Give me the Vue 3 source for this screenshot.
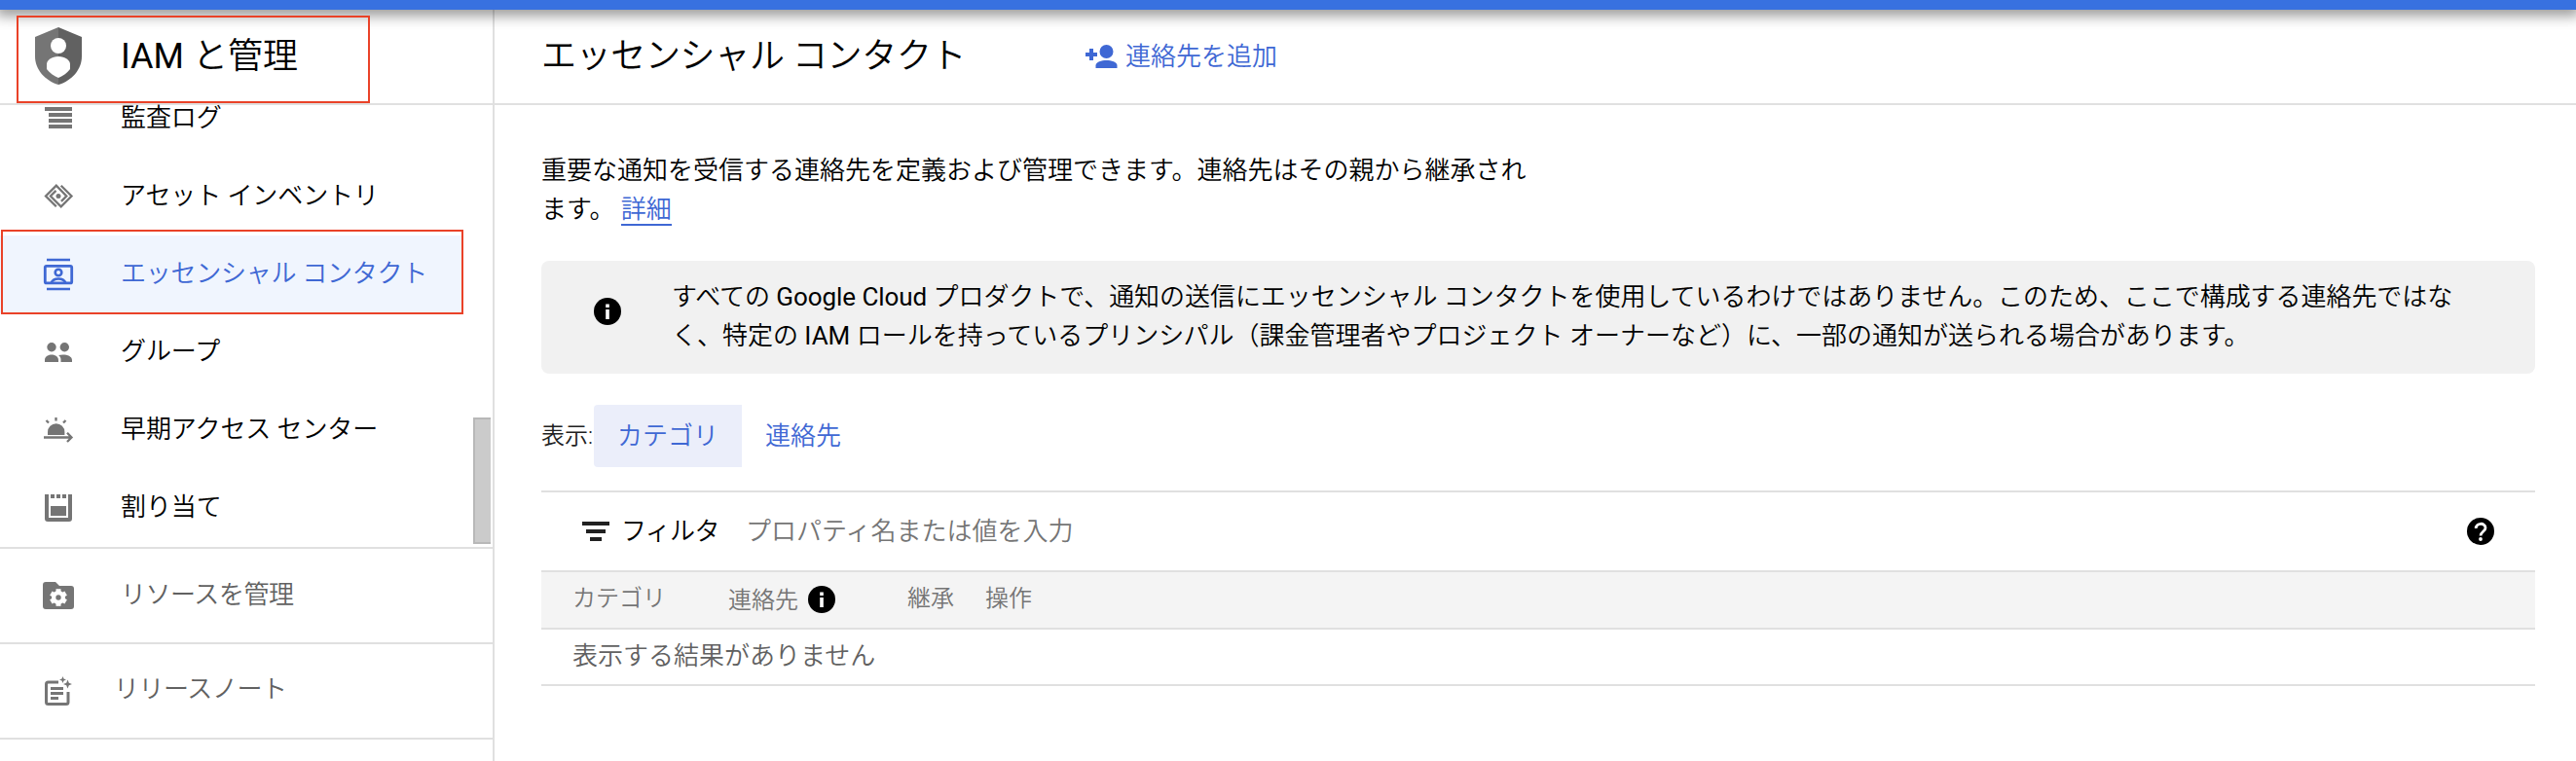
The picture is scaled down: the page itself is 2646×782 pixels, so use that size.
<script setup>
const nav = [
  { id: 'log', label: '監査ログ' },
  { id: 'asset', label: 'アセット インベントリ' },
  { id: 'contact', label: 'エッセンシャル コンタクト', active: true },
  { id: 'group', label: 'グループ' },
  { id: 'early', label: '早期アクセス センター' },
  { id: 'quota', label: '割り当て' },
]
</script>

<template>
  <div class="app">
    <div class="topbar"></div>
    <div class="body">
      <aside class="side">
        <div class="side-head">
          <svg class="shield" width="48" height="60" viewBox="0 0 48 60">
            <path fill="#757575" d="M24 0 0 10v20c0 13 10 25 24 29z" />
            <path fill="#616161" d="M24 0l24 10v20c0 13-10 25-24 29z" />
            <circle cx="24" cy="19" r="8" fill="#fff" />
            <path fill="#fff" d="M24 30c7 0 12 4 12 8v5c-3 4-7 7-12 9-5-2-9-5-12-9v-5c0-4 5-8 12-8z" />
          </svg>
          <span class="product">IAM <span class="light">と管理</span></span>
          <div class="mark mark-head"></div>
        </div>
        <nav class="nav">
          <div v-for="n in nav" :key="n.id" class="item" :class="{ active: n.active }">
            <svg class="ico" width="36" height="36" viewBox="0 0 36 36">
              <path v-if="n.id === 'log'" fill="currentColor" d="M4 6h28v4H4zM8 12h24v4H8zM8 18h24v4H8zM8 24h24v4H8z" />
              <g v-else-if="n.id === 'asset'" fill="none" stroke="currentColor" stroke-width="2.300">
                <path d="M20.700 6.700 31.500 17.500 20.700 28.300 9.900 17.500l5.600-5.600" />
                <path d="M15.800 28.300 5 17.500 15.800 6.700 26.300 17.500l-5.400 5.400" />
                <circle cx="18" cy="17.500" r="2.500" fill="currentColor" stroke="none" />
              </g>
              <g v-else-if="n.id === 'contact'" fill="none" stroke="currentColor">
                <path d="M6 3h24M6 33h24" stroke-width="2.600" />
                <rect x="4.300" y="9.300" width="27.400" height="17.600" rx="1.500" stroke-width="2.800" />
                <circle cx="18" cy="16" r="3.300" stroke-width="2.600" />
                <path d="M10.500 27c1.500-4 4.500-4.500 7.500-4.500s6 .5 7.500 4.500" stroke-width="2.600" />
              </g>
              <g v-else-if="n.id === 'group'" fill="currentColor">
                <circle cx="11" cy="12.700" r="4.700" /><circle cx="24.300" cy="12.700" r="4.700" />
                <path d="M4 28v-2c0-4 4-5.500 7-5.500s7 1.500 7 5.500v2zM20.500 28v-2.500c0-2-1-3.500-2.500-4.500 6-1.500 14 0 14 5v2z" />
              </g>
              <g v-else-if="n.id === 'early'">
                <path fill="currentColor" d="M7 23v-3a8.700 8.700 0 0 1 17.400 0v3z" />
                <path fill="none" stroke="currentColor" stroke-width="2.300" d="M3 25.500h28M27 20.800l4.500 4.700-4.500 4.500M15.500 5v3.500M5.500 8l2.500 2.500M25.500 8 23 10.500" />
              </g>
              <path v-else fill="currentColor" d="M4 4h4v24h20V4h4v25q0 3-3 3H7q-3 0-3-3zM10 16h16v10H10zM10 4h4v4h-4zM16 4h4v4h-4zM22 4h4v4h-4z" />
            </svg>
            <span>{{ n.label }}</span>
            <div v-if="n.active" class="mark mark-item"></div>
          </div>
          <div class="thumb"></div>
        </nav>
        <div class="extra">
          <svg class="ico" width="36" height="36" viewBox="0 0 36 36">
            <path fill="currentColor" d="M5 4h10l4 4h12q3 0 3 3v18q0 3-3 3H5q-3 0-3-3V7q0-3 3-3z" />
            <g fill="#fff"><circle cx="18" cy="20" r="7" /><path d="M15.500 11.200h5v17.600h-5z" /><path d="M15.500 11.200h5v17.600h-5z" transform="rotate(60 18 20)" /><path d="M15.500 11.200h5v17.600h-5z" transform="rotate(120 18 20)" /></g>
            <circle cx="18" cy="20" r="2.700" fill="currentColor" />
          </svg>
          <span>リソースを管理</span>
        </div>
        <div class="extra notes">
          <svg class="ico" width="36" height="36" viewBox="0 0 36 36">
            <path fill="none" stroke="currentColor" stroke-width="3" d="M18 9H7.500q-2 0-2 2v18.500q0 2 2 2H26q2 0 2-2V19" />
            <path fill="currentColor" d="M10 14h13v3H10zM10 19h13v3H10zM10 24h8v3h-8zM27.500 6.500l1.300 3.200L32 11l-3.200 1.300-1.300 3.200-1.300-3.200L23 11l3.200-1.300zM22.500 3l1 2.500 2.500 1-2.500 1-1 2.500-1-2.500-2.500-1 2.500-1z" />
          </svg>
          <span>リリースノート</span>
        </div>
      </aside>
      <main class="main">
        <header class="head">
          <h1>エッセンシャル コンタクト</h1>
          <a class="add">
            <svg width="33" height="24" viewBox="0 0 33 24"><path fill="currentColor" d="M4 4h4v4h4v4H8v4H4v-4H0V8h4z" /><circle cx="21.500" cy="7" r="7" fill="currentColor" /><path fill="currentColor" d="M10.500 24v-2.500c0-4 6-5.500 11-5.500s11 1.500 11 5.500V24z" /></svg>
            <span>連絡先を追加</span>
          </a>
        </header>
        <div class="content">
          <p class="desc">重要な通知を受信する連絡先を定義および管理できます。連絡先はその親から継承され<br />ます。 <a>詳細</a></p>
          <div class="banner">
            <svg width="28" height="28" viewBox="0 0 28 28"><circle cx="14" cy="14" r="14" /><path fill="#fff" d="M12.200 6.500h3.600v3.400h-3.600zM12.200 12h3.600v10h-3.600z" /></svg>
            <p><span class="tight">すべての <b>Google Cloud</b> プロダクトで、通知の送信にエッセンシャル コンタクトを使用しているわけではありません。このため、ここで構成する連絡先ではな</span><br />く、特定の <b>IAM</b> ロールを持っているプリンシパル（課金管理者やプロジェクト オーナーなど）に、一部の通知が送られる場合があります。</p>
          </div>
          <div class="view">
            <span class="view-label">表示:</span>
            <button class="tab on">カテゴリ</button>
            <button class="tab">連絡先</button>
          </div>
          <section class="table">
            <div class="filter">
              <svg width="28" height="20" viewBox="0 0 28 20"><path fill="#212121" d="M0 0h28v4H0zM4 8h20v4H4zM8 16h12v4H8z" /></svg>
              <span class="filter-label">フィルタ</span>
              <span class="placeholder">プロパティ名または値を入力</span>
              <svg class="help" width="28" height="28" viewBox="0 0 28 28"><circle cx="14" cy="14" r="14" /><path fill="none" stroke="#fff" stroke-width="2.800" d="M9.200 11c0-6.200 9.800-6.200 9.800-.6 0 3.600-5 4.200-5 8.100" /><circle cx="14" cy="22" r="1.900" fill="#fff" /></svg>
            </div>
            <div class="cols">
              <span class="col">カテゴリ</span>
              <span class="col-contact">連絡先
                <svg width="28" height="28" viewBox="0 0 28 28"><circle cx="14" cy="14" r="14" fill="#000" /><path fill="#fff" d="M12.200 6.500h3.600v3.400h-3.600zM12.200 12h3.600v10h-3.600z" /></svg>
              </span>
              <span class="col">継承</span>
              <span class="col">操作</span>
            </div>
            <div class="empty">表示する結果がありません</div>
          </section>
        </div>
      </main>
    </div>
  </div>
</template>

<style>
body { margin: 0; background: #fff; }
</style>

<style scoped>
* { box-sizing: border-box; }
.app {
  width: 2646px; height: 782px; overflow: hidden;
  display: flex; flex-direction: column;
  font: 350 26px/40px Roboto, "Noto Sans CJK JP", sans-serif; color: #000;
  background: #fff; white-space: nowrap;
}
svg { display: block; flex: none; }
.topbar { height: 10px; flex: none; background: #3871e0; box-shadow: 0 2px 14px 4px rgba(0, 0, 0, .42); position: relative; z-index: 2; }
.body { flex: 1; display: flex; }
.side { width: 508px; border-right: 2px solid #e0e0e0; display: flex; flex-direction: column; flex: none; }
.side-head { position: relative; height: 98px; border-bottom: 2px solid #e0e0e0; display: flex; align-items: center; padding-left: 36px; flex: none; }
.shield { margin-top: -1px; }
.product { margin-left: 40px; font-size: 36px; font-weight: 400; margin-top: -1px; }
.light { font-weight: 350; }
.mark { position: absolute; border: 2px solid #ea4228; z-index: 3; }
.mark-head { left: 17px; top: 6px; width: 363px; height: 90px; }
.mark-item { left: 1px; top: -6px; width: 475px; height: 87px; }
.nav { position: relative; height: 454px; flex: none; display: flex; flex-direction: column; justify-content: flex-end; }
.item { position: relative; width: 475px; height: 80px; display: flex; align-items: center; padding-left: 42px; flex: none; }
.item > span { margin-left: 46px; margin-top: -2px; letter-spacing: -.08px; }
.item.active > span { letter-spacing: -.25px; }
.extra > span { margin-left: 46px; margin-top: -2px; letter-spacing: -.45px; }
.ico { color: #757575; }
.item.active { background: #f0f5fe; color: #3f68d4; }
.item.active .ico { color: #3f68d4; }
.thumb { position: absolute; right: 2px; top: 321px; width: 18px; height: 130px; background: #cbcbcb; border: 2px solid #b8b8b8; border-right: 0; }
.extra { height: 98px; border-top: 2px solid #e0e0e0; display: flex; align-items: center; padding-left: 42px; color: #616161; flex: none; }
.notes { height: 100px; border-bottom: 2px solid #e0e0e0; }
.notes > span { margin-left: 39px; margin-top: -5px; }
.main { flex: 1; min-width: 0; }
.head { height: 98px; border-bottom: 2px solid #e0e0e0; padding-left: 48px; display: flex; align-items: center; }
h1 { margin: -1px 0 0; font-size: 36px; font-weight: 350; width: 559px; letter-spacing: -.35px; }
.add { display: flex; align-items: center; gap: 8px; color: #3f68d4; margin-top: -1px; }
.content { padding: 47px 42px 0 48px; }
.desc { margin: 0; }
.desc a { color: #3f68d4; display: inline-block; height: 37px; border-bottom: 2px solid #3f68d4; vertical-align: top; }
.banner { margin-top: 33px; height: 116px; border-radius: 8px; background: #f1f1f1; display: flex; padding: 17px 0 0 54px; gap: 52px; }
.banner svg { margin-top: 21px; }
.banner p { margin: 0; }
.tight { letter-spacing: -.05px; }
.banner b { font-weight: 400; }
.view { margin-top: 32px; height: 64px; display: flex; align-items: center; }
.view-label { font-size: 24px; width: 54px; color: #212121; }
.tab { border: 0; background: none; font: inherit; color: #3f68d4; height: 64px; padding: 0 24px; }
.on { background: #ebeefa; border-radius: 4px 0 0 4px; }
.table { margin-top: 24px; }
.filter { height: 82px; border-top: 2px solid #e0e0e0; display: flex; align-items: center; padding: 0 42px; }
.filter-label { margin-left: 12px; width: 104px; letter-spacing: -.7px; }
.placeholder { margin-left: 24px; color: #757575; }
.help { margin-left: auto; }
.cols { height: 61px; border: solid #e0e0e0; border-width: 2px 0; background: #f4f4f4; display: grid; grid-template-columns: 160px 184px 80px 80px; align-items: center; padding-left: 32px; font-size: 24px; color: #757575; }
.col { margin-top: -4px; }
.col-contact { display: flex; align-items: center; gap: 10px; }
.col-contact svg { margin-top: -1px; }
.empty { height: 58px; border-bottom: 2px solid #e0e0e0; padding-left: 32px; line-height: 55px; color: #616161; }
</style>
